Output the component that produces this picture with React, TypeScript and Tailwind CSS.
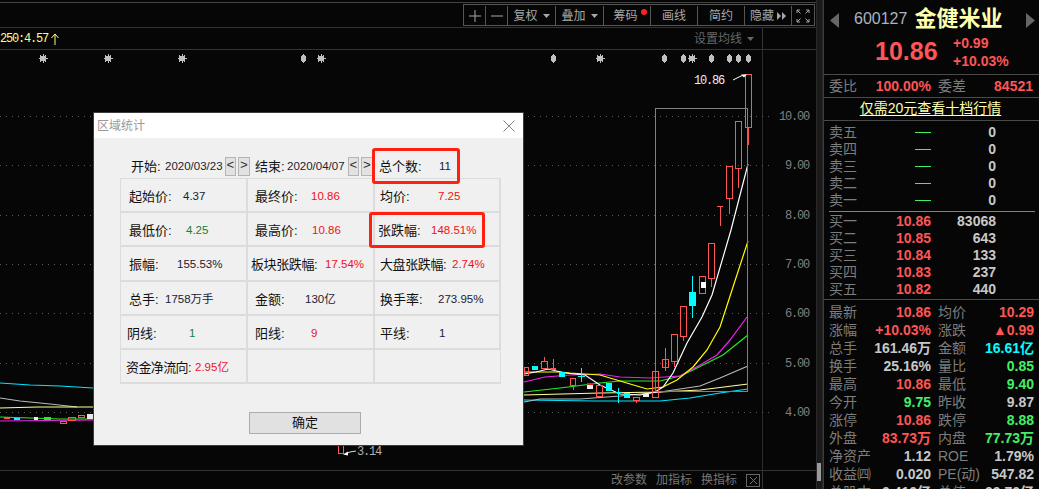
import React from "react";

const RED = "text-[#ff5555]";
const GREEN = "text-[#44ee66]";
const GRAY = "text-[#c8c8c8]";

const toolButtons = ["复权", "叠加"];

const Caret = ({ className = "" }: { className?: string }) => (
  <svg width="7" height="4" viewBox="0 0 7 4" className={className}>
    <path d="M0 0h7L3.5 4z" fill="currentColor" />
  </svg>
);

const Toolbar = () => (
  <div className="flex h-[25px] shrink-0 items-start justify-end border-b border-[#333] pt-[1px]">
    <div className="mr-[1px] flex h-[22px] divide-x divide-[#555] border border-[#555] pt-[1px] text-[12px] leading-[20px] text-[#a8a8a8]">
      <div className="flex w-[22px] items-center justify-center">
        <svg width="12" height="12" viewBox="0 0 12 12"><path d="M6 0v12M0 6h12" stroke="currentColor" /></svg>
      </div>
      <div className="flex w-[22px] items-center justify-center">
        <svg width="12" height="12" viewBox="0 0 12 12"><path d="M0 6h12" stroke="currentColor" /></svg>
      </div>
      {toolButtons.map((b) => (
        <div key={b} className="flex w-[48px] items-center justify-center gap-[5px]">
          {b}
          <Caret />
        </div>
      ))}
      <div className="relative flex w-[47px] items-center justify-center pr-[3px]">
        筹码
        <span className="absolute right-[3px] top-[3px] h-[6px] w-[6px] rounded-full bg-[#ff2020]" />
      </div>
      <div className="flex w-[47px] items-center justify-center">画线</div>
      <div className="flex w-[47px] items-center justify-center">简约</div>
      <div className="flex w-[47px] items-center justify-center gap-[3px] pl-[1px]">
        隐藏
        <svg width="10" height="8" viewBox="0 0 10 8"><path d="M0 0l4 4-4 4zM5 0l4 4-4 4z" fill="currentColor" /></svg>
      </div>
      <div className="flex w-[22px] items-center justify-center">
        <svg width="14" height="14" viewBox="0 0 14 14" fill="none" stroke="currentColor">
          <path d="M1 4V1h3M1 1l3.5 3.5M13 4V1h-3M13 1L9.5 4.5M1 10v3h3M1 13l3.5-3.5M13 10v3h-3M13 13l-3.5-3.5" />
        </svg>
      </div>
    </div>
  </div>
);

const pts = (list: number[][]) => list.map((p) => p.join(",")).join(" ");

const lines: { color: string; p: number[][] }[] = [
  { color: "#00e5ff", p: [[0, 383], [15, 384], [30, 385], [60, 386], [93, 388], [524, 400], [595, 401], [660, 401], [690, 398], [720, 393], [748, 389]] },
  { color: "#b8b8b8", p: [[0, 398], [20, 401], [50, 404], [77, 407], [524, 402], [540, 399], [580, 399], [620, 396], [660, 392], [700, 386], [720, 378], [748, 366]] },
  { color: "#ffff99", p: [[0, 408], [38, 407], [93, 407], [524, 395], [600, 393], [660, 392], [700, 390], [748, 384]] },
  { color: "#22ee22", p: [[0, 417], [60, 419], [93, 419], [524, 392], [560, 388], [600, 383], [620, 381], [660, 381], [680, 376], [693, 370], [723, 355], [748, 335]] },
  { color: "#ee22ee", p: [[0, 421], [93, 420], [524, 382], [545, 377], [570, 375], [600, 374], [620, 377], [650, 378], [680, 376], [700, 365], [717, 355], [730, 340], [747, 317]] },
  { color: "#ffff00", p: [[524, 372], [560, 372], [570, 373], [600, 375], [620, 381], [647, 389], [663, 387], [677, 380], [693, 367], [707, 350], [720, 327], [733, 287], [748, 241]] },
  { color: "#ffffff", p: [[524, 374], [536, 372], [548, 369], [565, 373], [585, 375], [600, 385], [620, 394], [640, 395], [655, 392], [663, 387], [673, 373], [687, 343], [702, 317], [712, 295], [731, 230], [748, 164]] },
];

// hollow red candles: x, top, width, height, wick from, wick to
const redCandles = [
  [745.5, 74.5, 6, 52.5, 127, 145],
  [735.5, 121.5, 6, 47, 168, 188],
  [726.5, 166.5, 6, 32, 198, 214],
  [708.5, 243.5, 6, 35, 278, 287],
  [699.5, 276.5, 6, 17, 276, 276],
  [680.5, 306.5, 6, 30, 337, 341],
  [671.5, 334.5, 6, 27, 362, 367],
  [662.5, 359.5, 6, 8, 348, 371],
  [652.5, 371.5, 6, 26, 397, 397],
  [524.5, 367.5, 4, 8, 375, 375],
  [541.5, 361.5, 6, 7, 357, 361],
  [570.5, 378.5, 5, 7, 385, 390],
  [596.5, 385.5, 6, 11, 396, 396],
  [633.5, 397.5, 6, 3, 400, 403],
  [338.5, 445.5, 5, 8, 453, 453],
];

const cyanBars = [
  [689, 292, 7, 14],
  [532, 366, 6, 4],
  [559, 372, 6, 5],
  [606, 383, 6, 8],
  [624, 393, 6, 5],
];

const stars = [43, 108, 182, 321, 600, 692];
const marks = [303, 553, 664, 683, 711, 729, 738, 748];
const grid = [116, 165, 215, 264, 313, 363, 412];
const axis = [["10.00", 116], ["9.00", 165], ["8.00", 215], ["7.00", 264], ["6.00", 313], ["5.00", 363], ["4.00", 412]] as const;

const Chart = () => (
  <svg viewBox="0 50 816 420" className="block h-full w-full" shapeRendering="crispEdges">
    <line x1="762.5" y1="50" x2="762.5" y2="470" stroke="#2c2c2c" />
    {grid.map((y) => (
      <line key={y} x1="0" y1={y + 0.5} x2="770" y2={y + 0.5} stroke="#5a5a5a" strokeDasharray="1 5" />
    ))}
    {axis.map(([t, y]) => (
      <text key={t} x="809" y={y + 4} textAnchor="end" fontFamily="'Liberation Mono',monospace" fontSize="12" letterSpacing="-1.2" fill="#808080">
        {t}
      </text>
    ))}
    {stars.map((x) => (
      <g key={x} stroke="#c0c0c0">
        <circle cx={x} cy="58.5" r="2.5" fill="#c0c0c0" />
        <path d={`M${x} 54v9M${x - 4.5} 58.5h9M${x - 3} 55.5l6 6M${x + 3} 55.5l-6 6`} />
      </g>
    ))}
    {marks.map((x) => (
      <path key={x} d={`M${x} 54l2.5 2.5v4L${x} 63l-2.5-2.5v-4z`} fill="#c0c0c0" />
    ))}
    <g shapeRendering="geometricPrecision" strokeWidth="1.2" fill="none">
      {lines.slice(0, 5).map((l) => (
        <React.Fragment key={l.color}>
          <polyline points={pts(l.p.filter((p) => p[0] <= 93))} stroke={l.color} />
          <polyline points={pts(l.p.filter((p) => p[0] > 93))} stroke={l.color} />
        </React.Fragment>
      ))}
      {lines.slice(5).map((l) => (
        <polyline key={l.color} points={pts(l.p)} stroke={l.color} />
      ))}
    </g>
    {redCandles.map(([x, y, w, h, a, b]) => (
      <g key={`${x}-${y}`} stroke="#ff5555">
        <rect x={x} y={y} width={w} height={h} fill="none" />
        {b > a && <line x1={x + w / 2} y1={a} x2={x + w / 2} y2={b} />}
      </g>
    ))}
    <path d="M717 206.5h6M720 206v20" stroke="#ff5555" />
    <rect x="701" y="282" width="5" height="6" fill="#fff" />
    <rect x="587" y="383" width="6" height="2" fill="#e02020" />
    <rect x="587" y="385" width="6" height="4" fill="#f0f0f0" />
    <rect x="643" y="394" width="6" height="3" fill="#f0f0f0" />
    <path d="M550 368.5h6" stroke="#ff5555" strokeWidth="2" />
    <path d="M553 359v9" stroke="#ff5555" />
    {cyanBars.map(([x, y, w, h]) => (
      <rect key={x} x={x} y={y} width={w} height={h} fill="#00ffff" />
    ))}
    <path d="M692.5 276v42M581.5 368v14M578 376.5h7M618.5 388v15M615 392.5h7" stroke="#00ffff" />
    <rect x="4" y="417" width="6" height="2" fill="#ff5555" />
    <rect x="14" y="418" width="6" height="2" fill="#00ffff" />
    <rect x="34" y="417" width="4" height="3" fill="#f0f0f0" />
    <rect x="44" y="417" width="7" height="3" fill="#22ee22" />
    <rect x="87" y="414" width="6" height="5" fill="#e8e8e8" />
    <rect x="60" y="421.5" width="6" height="2" fill="none" stroke="#ff5555" />
    <rect x="68" y="417.5" width="7" height="3" fill="none" stroke="#ff5555" />
    <rect x="78" y="415.5" width="6" height="2" fill="none" stroke="#ff5555" />
    <rect x="655.5" y="108.5" width="92" height="282.5" fill="none" stroke="#808080" />
    <g fontFamily="'Liberation Mono',monospace" fontSize="12" letterSpacing="-1.2">
      <text x="694" y="84" fill="#f0f0f0">10.86</text>
      <text x="357" y="455" fill="#b0b0b0">3.14</text>
    </g>
    <g shapeRendering="auto">
      <path d="M733 80l8-4 4-1" stroke="#fff" fill="none" />
      <path d="M741 74.5h6l-3 3z" fill="#fff" />
      <path d="M345 454l5-2 6-1" stroke="#ddd" fill="none" />
      <path d="M343 454.5l5-3v4z" fill="#fff" />
    </g>
  </svg>
);

const LeftArea = () => (
  <div className="flex h-full w-[816px] flex-col overflow-hidden font-['Liberation_Sans','Noto_Sans_CJK_SC',sans-serif]">
    <div className="h-[3px] shrink-0 border-b border-[#444]" />
    <Toolbar />
    <div className="flex h-[22px] shrink-0 items-center border-b border-[#333]">
      <span className="font-['Liberation_Mono',monospace] text-[12px] tracking-[-1.2px] text-[#ffff88]">250:4.57</span>
      <svg width="8" height="12" viewBox="0 0 8 12" className="ml-[3px] text-[#ffff88]" fill="none" stroke="currentColor">
        <path d="M4 12V1M0.5 5L4 1l3.5 4" />
      </svg>
      <div className="ml-auto flex items-center gap-[5px] text-[12px] text-[#666]">
        设置均线
        <Caret />
      </div>
      <div className="ml-[8px] h-full w-[54px] border-l border-[#333]" />
    </div>
    <div className="min-h-0 flex-1">
      <Chart />
    </div>
    <div className="flex h-[19px] shrink-0 items-center justify-end border-t border-[#333] text-[12px] text-[#777]">
      <span>改参数</span>
      <span className="ml-[9px]">加指标</span>
      <span className="ml-[9px]">换指标</span>
      <div className="ml-[9px] flex h-[13px] w-[14px] items-center justify-center border border-[#666]">
        <svg width="9" height="9" viewBox="0 0 9 9"><path d="M1 1l7 7M8 1L1 8" stroke="currentColor" /></svg>
      </div>
      <div className="ml-[2px] h-full w-[54px] border-l border-[#333]" />
    </div>
  </div>
);

const Rule = () => <div className="h-px shrink-0 bg-[#4a4a4a]" />;

const label = "text-[14px] leading-[17px] text-[#7d7d7d]";
const num = "font-bold text-[14px] leading-[17px]";

const QuoteHeader = () => (
  <div className="relative h-[74px] shrink-0">
    <svg width="9" height="15" viewBox="0 0 9 15" className="absolute left-[6px] top-[13px]"><path d="M9 0v15L0 7.5z" fill="#666" /></svg>
    <svg width="9" height="15" viewBox="0 0 9 15" className="absolute left-[202px] top-[13px]"><path d="M0 0v15l9-7.5z" fill="#666" /></svg>
    <div className="flex h-[40px] items-center pb-[2px] pl-[30px]">
      <span className="text-[16px] text-[#a9b4c0]">600127</span>
      <span className="ml-[7px] text-[22px] font-bold leading-[26px] text-[#ffffb0]">金健米业</span>
    </div>
    <div className="flex pl-[51px]">
      <span className="-mt-[4px] w-[78px] text-[25px] font-bold leading-[30px] text-[#ff5555]">10.86</span>
      <div className={`-mt-[5px] ${num} ${RED}`}>
        <div>+0.99</div>
        <div className="mt-[1px]">+10.03%</div>
      </div>
    </div>
  </div>
);

const sellRows = ["卖五", "卖四", "卖三", "卖二", "卖一"];
const buyRows = [
  { a: "买一", b: "10.86", c: "83068" },
  { a: "买二", b: "10.85", c: "643" },
  { a: "买三", b: "10.84", c: "133" },
  { a: "买四", b: "10.83", c: "237" },
  { a: "买五", b: "10.82", c: "440" },
];

const OrderRow = ({ a, b, c }: { a: string; b?: string; c: string }) => (
  <div className="flex h-[17px] shrink-0 items-center pl-[5px]">
    <span className={`w-[28px] shrink-0 whitespace-nowrap ${label}`}>{a}</span>
    {b ? (
      <span className={`w-[74px] text-right ${num} ${RED}`}>{b}</span>
    ) : (
      <span className="ml-[58px] h-px w-[16px] bg-[#44ee66]" />
    )}
    <span className={`ml-auto mr-[43px] ${num} ${GRAY}`}>{c}</span>
  </div>
);

type Stat = [string, string, string, string, string, string];

const stats: Stat[] = [
  ["最新", "10.86", RED, "均价", "10.29", RED],
  ["涨幅", "+10.03%", RED, "涨跌", "▲0.99", RED],
  ["总手", "161.46万", GRAY, "金额", "16.61亿", "text-[#00ffff]"],
  ["换手", "25.16%", GRAY, "量比", "0.85", GREEN],
  ["最高", "10.86", RED, "最低", "9.40", GREEN],
  ["今开", "9.75", GREEN, "昨收", "9.87", GRAY],
  ["涨停", "10.86", RED, "跌停", "8.88", GREEN],
  ["外盘", "83.73万", RED, "内盘", "77.73万", GREEN],
  ["净资产", "1.12", GRAY, "ROE", "1.79%", GRAY],
  ["收益㈣", "0.020", GRAY, "PE(动)", "547.82", GRAY],
  ["总股本", "0.410亿", GRAY, "总值", "99.70亿", GRAY],
];

const StatRow = ({ s }: { s: Stat }) => (
  <div className="flex h-[18px] shrink-0 items-center pl-[5px]">
    <span className={`w-[45px] whitespace-nowrap ${label}`}>{s[0]}</span>
    <span className={`w-[57px] whitespace-nowrap text-right ${num} ${s[2]}`}>{s[1]}</span>
    <span className={`ml-[7px] w-[45px] whitespace-nowrap ${label}`}>{s[3]}</span>
    <span className={`w-[51px] whitespace-nowrap text-right ${num} ${s[5]}`}>{s[4]}</span>
  </div>
);

const QuotePanel = () => (
  <div className="flex h-full w-[216px] flex-col overflow-hidden border-l border-[#3a3a3a] font-['Liberation_Sans','Noto_Sans_CJK_SC',sans-serif]">
    <QuoteHeader />
    <Rule />
    <div className="flex h-[22px] shrink-0 items-center pl-[5px]">
      <span className={`w-[45px] ${label}`}>委比</span>
      <span className={`w-[57px] text-right ${num} ${RED}`}>100.00%</span>
      <span className={`ml-[7px] w-[45px] ${label}`}>委差</span>
      <span className={`w-[50px] text-right ${num} ${RED}`}>84521</span>
    </div>
    <Rule />
    <div className="flex h-[22px] shrink-0 items-center justify-center pb-[1px] pr-[2px] text-[14px] text-[#ffffb0] underline underline-offset-2">
      仅需20元查看十档行情
    </div>
    <Rule />
    <div className="shrink-0 pt-[3px]">
      {sellRows.map((a) => (
        <OrderRow key={a} a={a} c="0" />
      ))}
    </div>
    <div className="ml-[5px] mr-[4px] mt-[2px] h-px shrink-0 bg-[#808080]" />
    <div className="shrink-0 pt-[1px]">
      {buyRows.map((r) => (
        <OrderRow key={r.a} {...r} />
      ))}
    </div>
    <div className="mt-[1px] h-px shrink-0 bg-[#4a4a4a]" />
    <div className="shrink-0 pt-[3px]">
      {stats.map((s) => (
        <StatRow key={s[0]} s={s} />
      ))}
    </div>
  </div>
);

const VAL_RED = "text-[#f01020]";
const VAL_GREEN = "text-[#108040]";
const VAL_DARK = "text-[#202030]";

const statCells = [
  { l: "起始价:", v: "4.37", c: VAL_DARK, box: "w-[62px] pl-[8px]" },
  { l: "最终价:", v: "10.86", c: VAL_RED, box: "w-[63px] pl-[7px]" },
  { l: "均价:", v: "7.25", c: VAL_RED, box: "w-[63px] pl-[5px]" },
  { l: "最低价:", v: "4.25", c: VAL_GREEN, box: "w-[65px] pl-[8px]" },
  { l: "最高价:", v: "10.86", c: VAL_RED, box: "w-[64px] pl-[7px]" },
  { l: "张跌幅:", v: "148.51%", c: VAL_RED, box: "w-[56px] pl-[3px]" },
  { l: "振幅:", v: "155.53%", c: VAL_DARK, box: "w-[56px] pl-[8px]" },
  { l: "板块张跌幅:", v: "17.54%", c: VAL_RED, box: "w-[77px] pl-[3px] tracking-[-0.4px]" },
  { l: "大盘张跌幅:", v: "2.74%", c: VAL_RED, box: "w-[77px] pl-[5px] tracking-[-0.4px]" },
  { l: "总手:", v: "1758万手", c: VAL_DARK, box: "w-[44px] pl-[8px]" },
  { l: "金额:", v: "130亿", c: VAL_DARK, box: "w-[57px] pl-[7px]" },
  { l: "换手率:", v: "273.95%", c: VAL_DARK, box: "w-[63px] pl-[5px]" },
  { l: "阴线:", v: "1", c: VAL_GREEN, box: "w-[68px] pl-[6px]" },
  { l: "阳线:", v: "9", c: VAL_RED, box: "w-[63px] pl-[7px]" },
  { l: "平线:", v: "1", c: VAL_DARK, box: "w-[64px] pl-[5px]" },
  { l: "资金净流向:", v: "2.95亿", c: VAL_RED, box: "w-[74px] pl-[5px] tracking-[-0.6px]" },
  { l: "", v: "", c: "", box: "" },
  { l: "", v: "", c: "", box: "" },
];

const StepButtons = () => (
  <div className="-mt-[1px] flex gap-[2px] font-['Liberation_Mono',monospace] text-[13px] text-[#303030]">
    <span className="flex h-[19px] w-[11px] items-center justify-center border border-[#b4b4b4] bg-[#e2e2e2]">&lt;</span>
    <span className="flex h-[19px] w-[12px] items-center justify-center border border-[#b4b4b4] bg-[#e2e2e2]">&gt;</span>
  </div>
);

const StatsDialog = () => (
  <div className="absolute left-[93px] top-[112px] flex h-[334px] w-[431px] flex-col border border-[#3c3c3c] bg-[#f0f0f0] font-['Liberation_Sans','Noto_Sans_CJK_SC',sans-serif] text-[13px] text-[#111]">
    <div className="flex h-[25px] items-center justify-between bg-white pl-[3px] pr-[8px] text-[12px] text-[#999]">
      区域统计
      <svg width="12" height="12" viewBox="0 0 12 12" className="text-[#888]"><path d="M0.5 0.5l11 11M11.5 0.5l-11 11" stroke="currentColor" /></svg>
    </div>
    <div className="relative flex h-[40px] items-center pl-[37px] pt-[17px]">
      <span className="w-[34px]">开始:</span>
      <span className="w-[60px] text-[11.5px] text-[#202030]">2020/03/23</span>
      <StepButtons />
      <span className="ml-[5px] w-[32px]">结束:</span>
      <span className="w-[61px] text-[11.5px] text-[#202030]">2020/04/07</span>
      <StepButtons />
      <span className="ml-[6px] w-[60px]">总个数:</span>
      <span className="text-[11.5px] text-[#202030]">11</span>
    </div>
    <div className="ml-[26px] grid w-[380px] grid-cols-[127px_127px_126px] grid-rows-[34px_34px_35px_34px_34px_34px] border-l border-t border-[#dcdcdc]">
      {statCells.map((cell, i) => (
        <div key={i} className="flex items-center whitespace-nowrap border-b-2 border-r-2 border-[#dcdcdc] pt-[3px] last:border-r">
          <span className={`shrink-0 ${cell.box}`}>{cell.l}</span>
          <span className={`text-[11.5px] ${cell.c}`}>{cell.v}</span>
        </div>
      ))}
    </div>
    <div className="mt-[28px] flex justify-center pr-[7px]">
      <div className="flex h-[22px] w-[112px] items-center justify-center border border-[#adadad] bg-[#e1e1e1]">确定</div>
    </div>
    {/* 红框标注 */}
    <div className="absolute left-[278px] top-[35px] h-[36px] w-[88px] rounded-[3px] border-[3px] border-[#ff2010]" />
    <div className="absolute left-[275px] top-[99px] h-[36px] w-[116px] rounded-[3px] border-[3px] border-[#ff2010]" />
  </div>
);

export default function App() {
  return (
    <div className="relative flex h-[489px] w-[1039px] overflow-hidden bg-[#060606]">
      <LeftArea />
      <div className="relative h-full w-[7px] border-x border-[#2a2a2a] bg-[#1a1a1a]">
        <div className="absolute left-0 top-[463px] h-[18px] w-[4px] bg-[#9a9a9a]" />
      </div>
      <QuotePanel />
      <StatsDialog />
    </div>
  );
}
